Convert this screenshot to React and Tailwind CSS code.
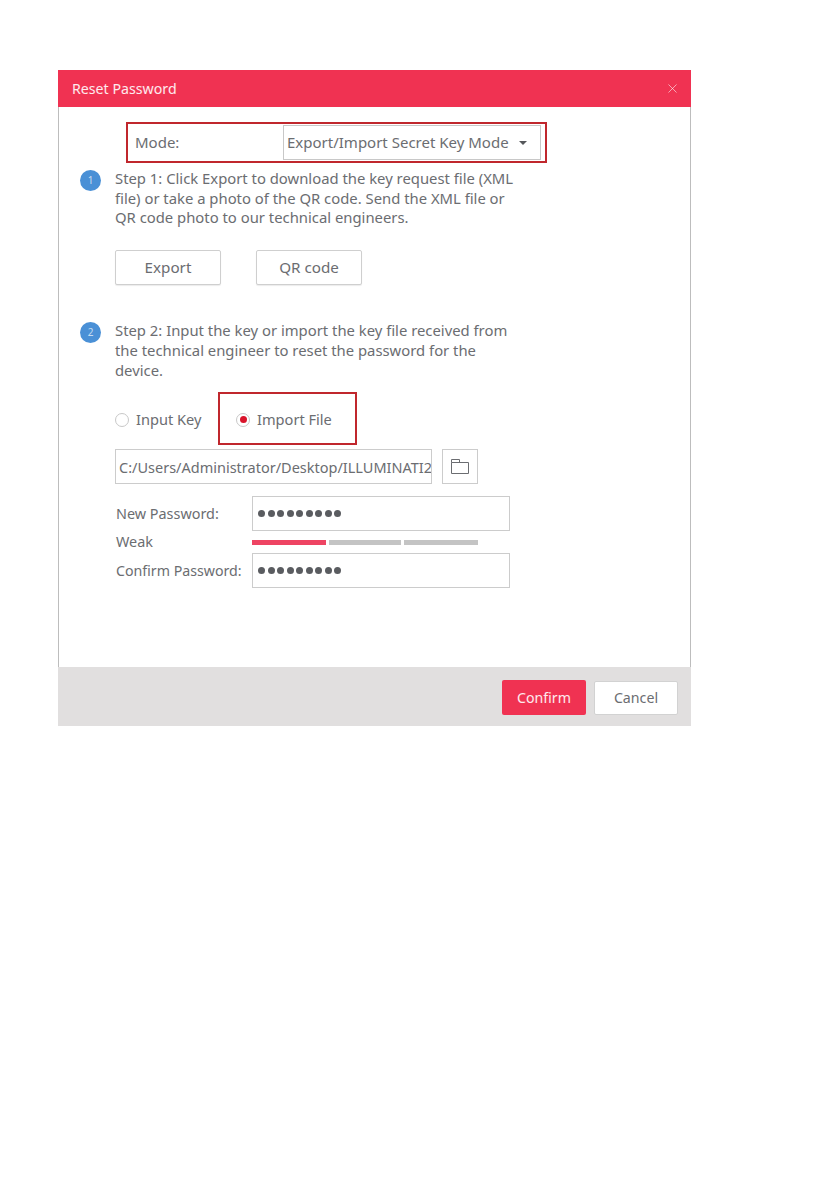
import { X } from 'lucide-react'

const FONT = "font-['Noto_Sans','Liberation_Sans',sans-serif]"

function StepBadge({ n }) {
  return (
    <div className="flex h-[21px] w-[21px] shrink-0 items-center justify-center rounded-full bg-[#4a90d6] text-[10px] text-white/70">
      {n}
    </div>
  )
}

function OutlineButton({ children }) {
  return (
    <button className="flex h-[35px] w-[106px] items-center justify-center rounded-[2px] border border-[#cfcfcf] bg-white text-[15.2px] text-[#6b6d71] shadow-[0_1px_1px_rgba(0,0,0,0.08)]">
      {children}
    </button>
  )
}

function Radio({ checked }) {
  return (
    <span className="flex h-[14px] w-[14px] shrink-0 items-center justify-center rounded-full border border-[#c8c8c8] bg-white">
      {checked && <span className="h-[7px] w-[7px] rounded-full bg-[#d9142b]" />}
    </span>
  )
}

function PasswordField() {
  return (
    <div className="flex h-[35px] w-[258px] items-center border border-[#cccccc] bg-white pl-[5px]">
      <span className="flex gap-[2.5px]">
        {[...Array(9)].map((_, i) => (
          <span key={i} className="h-[7px] w-[7px] rounded-full bg-[#5a5c60]" />
        ))}
      </span>
    </div>
  )
}

export default function App() {
  return (
    <div className={`min-h-[1191px] bg-white pl-[58px] pt-[70px] ${FONT}`}>
      <div className="w-[633px]">
        {/* title bar */}
        <div className="flex h-[37px] items-center justify-between bg-[#f03252] pl-[14px] pr-[11px] text-[14.2px] text-white/90">
          <span>Reset Password</span>
          <X className="h-[15px] w-[15px] text-white/60" strokeWidth={1.5} />
        </div>

        <div className="h-[560px] border-x border-[#bdbdbd] pt-[15px] text-[14.4px] text-[#6b6d71]">
          {/* mode row */}
          <div className="ml-[67px] flex h-[41px] w-[421px] items-center border-2 border-[#c0272d] pl-[7px] text-[15px]">
            <span className="w-[148px]">Mode:</span>
            <div className="flex h-[35px] w-[258px] items-center border border-[#c8c8c8] pl-[3px]">
              <span className="whitespace-nowrap">Export/Import Secret Key Mode</span>
              <svg className="ml-[10px] h-[4px] w-[8px]" viewBox="0 0 8 4">
                <path d="M0 0h8L4 4z" fill="#55575b" />
              </svg>
            </div>
          </div>

          {/* step 1 */}
          <div className="ml-[21px] mt-[7px] flex gap-[14px]">
            <StepBadge n="1" />
            <div>
              <p className="-mt-[1px] w-[410px] whitespace-nowrap text-[14.84px] leading-[19.7px]">
                Step 1: Click Export to download the key request file (XML
                <br />
                file) or take a photo of the QR code. Send the XML file or
                <br />
                QR code photo to our technical engineers.
              </p>
              <div className="mt-[22px] flex gap-[35px]">
                <OutlineButton>Export</OutlineButton>
                <OutlineButton>QR code</OutlineButton>
              </div>
            </div>
          </div>

          {/* step 2 */}
          <div className="ml-[21px] mt-[37px] flex gap-[14px]">
            <StepBadge n="2" />
            <div>
              <p className="-mt-[1px] w-[410px] whitespace-nowrap text-[14.84px] leading-[19.7px]">
                Step 2: Input the key or import the key file received from
                <br />
                the technical engineer to reset the password for the
                <br />
                device.
              </p>

              <div className="mt-[12px] flex h-[53px] items-center text-[14.6px]">
                <label className="flex w-[103px] items-center gap-[7px] pt-[2px]">
                  <Radio />
                  Input Key
                </label>
                <label className="flex h-[53px] w-[139px] items-center gap-[7px] border-2 border-[#c0272d] pl-[16px] pt-[2px]">
                  <Radio checked />
                  Import File
                </label>
              </div>

              <div className="mt-[4px] flex gap-[10px]">
                <div className="flex h-[35px] w-[317px] items-center overflow-hidden whitespace-nowrap border border-[#cccccc] pl-[3px] pt-[2px] text-[14.5px]">
                  C:/Users/Administrator/Desktop/ILLUMINATI2
                </div>
                <div className="flex h-[35px] w-[36px] items-center justify-center border border-[#cccccc]">
                  <svg className="h-[15px] w-[18px]" viewBox="0 0 18 15" fill="none" stroke="#6b6d71">
                    <path d="M.5 3.5V.5h8v3M.5 3.5h17v11H.5z" />
                  </svg>
                </div>
              </div>

              <div className="mt-[12px] flex items-center">
                <span className="w-[137px] pl-[1px]">New Password:</span>
                <PasswordField />
              </div>
              <div className="flex h-[22px] items-center">
                <span className="w-[137px] pl-[1px]">Weak</span>
                <div className="flex gap-[3px]">
                  <span className="h-[5px] w-[74px] bg-[#ee4463]" />
                  <span className="h-[5px] w-[72px] bg-[#c4c4c4]" />
                  <span className="h-[5px] w-[74px] bg-[#c4c4c4]" />
                </div>
              </div>
              <div className="flex items-center">
                <span className="w-[137px] whitespace-nowrap pl-[1px] text-[14.2px]">Confirm Password:</span>
                <PasswordField />
              </div>
            </div>
          </div>
        </div>

        {/* footer */}
        <div className="flex h-[59px] items-start justify-end gap-[8px] bg-[#e1dfdf] pr-[13px] pt-[13px] text-[14.2px]">
          <button className="h-[35px] w-[84px] rounded-[2px] bg-[#f03252] text-white/90">Confirm</button>
          <button className="mt-[1px] h-[34px] w-[84px] rounded-[2px] border border-[#d2d2d2] bg-white text-[#6b6d71]">Cancel</button>
        </div>
      </div>
    </div>
  )
}
